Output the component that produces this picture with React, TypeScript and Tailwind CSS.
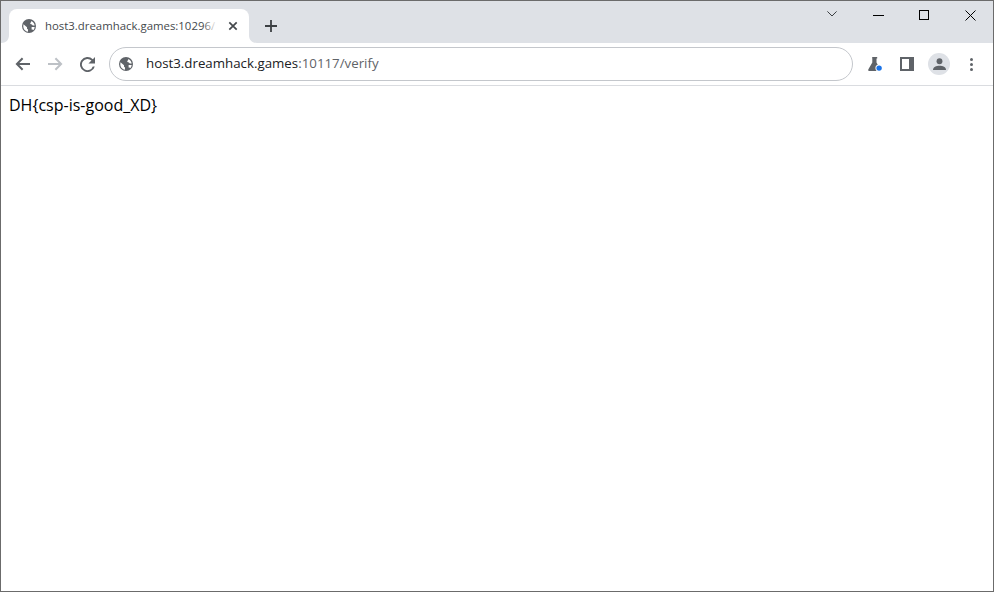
import React from "react";

const Globe = () => (
  <svg width="14" height="14" viewBox="0 0 14 14" className="shrink-0">
    <circle cx="7" cy="7" r="7" fill="#5f6368" />
    <path d="M1.5 5.2 5 8.2v1c0 .7.4 1.1 1 1.1v2.4C3.4 12.4 1.3 10 1.3 7.2c0-.7.1-1.4.2-2z" fill="#ffffff" />
    <path d="M9.3 1.9c1.8.8 3.1 2.5 3.4 4.5h-1.9l-.9-1-1.5-.5-.2-1.2c.6 0 1-.4 1.1-1.8z" fill="#ffffff" />
    <path d="M9.6 8h3.1c-.1 1.3-.6 2.4-1.4 3.3-.2-.5-.6-.9-1.2-.9h-.5z" fill="#ffffff" />
  </svg>
);

const Back = ({ color }: { color: string }) => (
  <svg width="16" height="16" viewBox="0 0 16 16" fill="none" stroke={color} strokeWidth="2">
    <path d="M15 8H2.5" />
    <path d="M7.6 2.2 1.9 8l5.7 5.8" />
  </svg>
);

const Corner = ({ flip }: { flip?: boolean }) => (
  <svg width="8" height="8" viewBox="0 0 8 8" className={flip ? "absolute bottom-0 left-full" : "absolute bottom-0 right-full"}>
    <path d={flip ? "M0 0C0 5 3 8 8 8H0Z" : "M8 0C8 5 5 8 0 8H8Z"} fill="#ffffff" />
  </svg>
);

export default function App() {
  return (
    <div className="w-[994px] h-[592px] flex flex-col overflow-hidden bg-white border border-[#6b6b6b] font-['Open_Sans','Noto_Sans',sans-serif]">
      <div className="h-[42px] shrink-0 bg-[#dee1e6] flex items-end pl-[8px]">
        <div className="relative w-[240px] h-[34px] bg-white rounded-t-[8px] flex items-center pl-[13px] pr-[8px]">
          <Corner />
          <Corner flip />
          <Globe />
          <div className="relative ml-[9px] w-[172px] overflow-hidden whitespace-nowrap text-[11.4px] text-[#45494d] leading-[16px]">
            host3.dreamhack.games:10296/
            <div className="absolute inset-y-0 right-0 w-[14px] bg-gradient-to-r from-transparent to-white" />
          </div>
          <svg width="10" height="10" viewBox="0 0 10 10" className="ml-[11px] shrink-0" stroke="#45494d" strokeWidth="1.7">
            <path d="M1.3 1.3 8.7 8.7M8.7 1.3 1.3 8.7" />
          </svg>
        </div>
        <svg width="12" height="12" viewBox="0 0 12 12" className="ml-[16px] mb-[11px] shrink-0" stroke="#3c4043" strokeWidth="1.8">
          <path d="M6 0v12M0 6h12" />
        </svg>
        <div className="flex-1 self-stretch flex items-start justify-end">
          <svg width="10" height="6" viewBox="0 0 10 6" fill="none" stroke="#3c4043" strokeWidth="1" className="mt-[10px] mr-[18px]">
            <path d="M.4.4 5 5 9.6.4" />
          </svg>
          <div className="w-[46px] flex justify-center mt-[14px]"><div className="w-[11px] h-px bg-black" /></div>
          <div className="w-[46px] flex justify-center mt-[9px]"><div className="w-[10px] h-[10px] border border-black" /></div>
          <svg width="11" height="11" viewBox="0 0 11 11" stroke="#000" strokeWidth="1" className="mt-[9px] mr-[17px] ml-[18px]">
            <path d="M.5.5 10.5 10.5M10.5.5.5 10.5" />
          </svg>
        </div>
      </div>

      <div className="h-[43px] shrink-0 bg-white border-b border-[#dadce0] flex items-center">
        <div className="ml-[14px] flex"><Back color="#5f6368" /></div>
        <div className="ml-[16px] -scale-x-100 flex"><Back color="#bdc1c6" /></div>
        <svg width="15" height="15" viewBox="0 0 16 16" className="ml-[17px]" fill="#5f6368">
          <path d="M13.65 2.35A8 8 0 1 0 15.74 10h-2.08a6 6 0 1 1-1.42-6.24L9 7h7V0z" />
        </svg>
        <div className="ml-[14px] w-[744px] h-[34px] rounded-full border border-[#c4c7cc] flex items-center pl-[9px] text-[13.3px]">
          <Globe />
          <span className="ml-[13px] text-[#202124]">host3.dreamhack.games</span>
          <span className="text-[#5f6368]">:10117/verify</span>
        </div>
        <svg width="16" height="16" viewBox="0 0 16 16" className="ml-[14px]">
          <path d="M5.2 1h5v1.6h-.7v4l3.8 6.6c.5.9 0 1.8-1 1.8H2.4c-1 0-1.5-.9-1-1.8l3.9-6.6v-4h-.1z" fill="#5f6368" />
          <circle cx="12.1" cy="12.1" r="3.7" fill="#ffffff" />
          <circle cx="12.1" cy="12.1" r="2.7" fill="#1a73e8" />
        </svg>
        <div className="ml-[17px] w-[14px] h-[14px] border-[2px] border-[#5f6368] border-r-[5px] bg-white" />
        <div className="ml-[14px] w-[22px] h-[22px] rounded-full bg-[#dee1e6] flex items-center justify-center">
          <svg width="13" height="13" viewBox="0 0 12 12" fill="#5f6368">
            <circle cx="6" cy="3" r="2.7" />
            <path d="M0 11c0-2.6 3-3.8 6-3.8s6 1.2 6 3.8z" />
          </svg>
        </div>
        <div className="ml-[20px] flex flex-col gap-[2px]">
          <div className="w-[3px] h-[3px] rounded-full bg-[#5f6368]" />
          <div className="w-[3px] h-[3px] rounded-full bg-[#5f6368]" />
          <div className="w-[3px] h-[3px] rounded-full bg-[#5f6368]" />
        </div>
      </div>

      <div className="flex-1 bg-white pl-[8px] pt-[8px] text-[16px] leading-[22px] text-black">DH{"{"}csp-is-good_XD{"}"}</div>
    </div>
  );
}
